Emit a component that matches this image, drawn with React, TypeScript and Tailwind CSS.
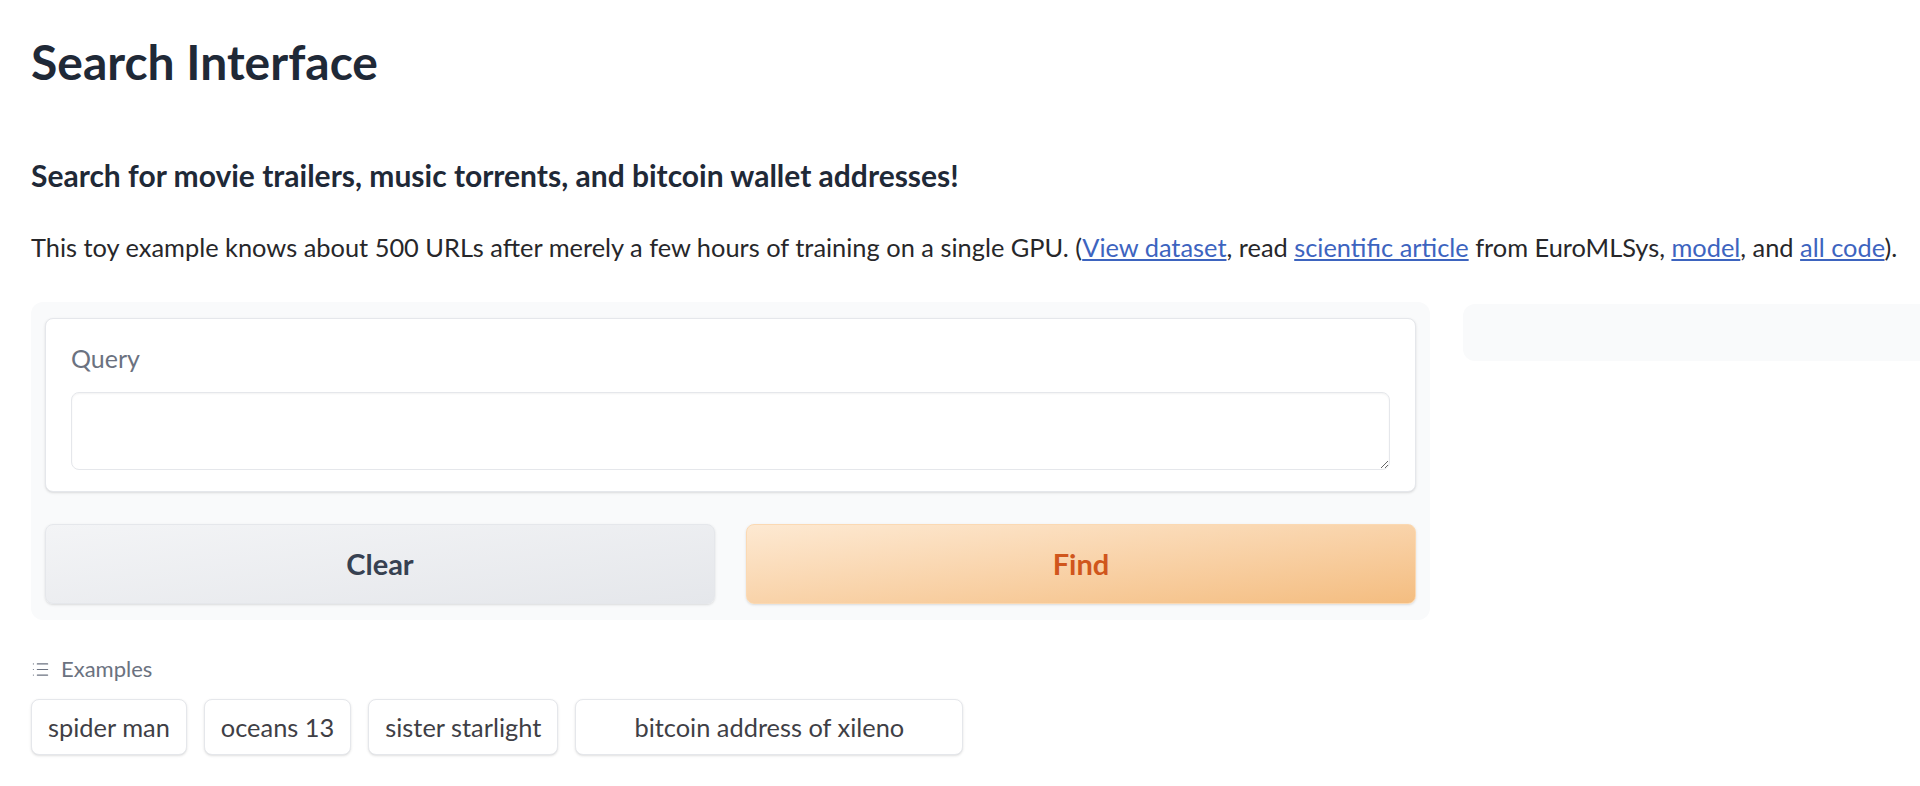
import React from "react";
import { List } from "lucide-react";

const examples = ["spider man", "oceans 13", "sister starlight"];

export default function App() {
  return (
    <div className="min-h-screen overflow-hidden bg-white pl-[31px] font-['Lato','Noto_Sans',sans-serif] text-[#1f2937]">
      <h1 className="pt-[34px] text-[48px] font-bold leading-[56px]">Search Interface</h1>

      <h3 className="mt-[65px] text-[30px] font-bold leading-[40px]">
        Search for movie trailers, music torrents, and bitcoin wallet addresses!
      </h3>

      <p className="mt-[35px] whitespace-nowrap text-[25.4px] leading-[34px] text-[#27272a]">
        This toy example knows about 500 URLs after merely a few hours of training on a single GPU. (
        <a className="text-[#3d64bf] underline">View dataset</a>, read{" "}
        <a className="text-[#3d64bf] underline">scientific article</a> from EuroMLSys,{" "}
        <a className="text-[#3d64bf] underline">model</a>, and{" "}
        <a className="text-[#3d64bf] underline">all code</a>).
      </p>

      <div className="mt-[38px] flex items-start gap-[33px]">
        <div className="flex w-[1399px] shrink-0 flex-col gap-[32px] rounded-xl bg-[#f9fafb] p-[14px] pt-[16px] pb-[16px]">
          <div className="rounded-lg border border-[#e5e7eb] bg-white px-[25px] pt-[24px] pb-[21px] shadow-sm">
            <div className="text-[25px] leading-[30px] text-[#6b7280]">Query</div>
            <textarea className="mt-[19px] block h-[78px] w-full resize-y rounded-lg border border-[#e5e7eb] bg-white shadow-[inset_0_1px_2px_rgba(0,0,0,0.05)] outline-none" />
          </div>
          <div className="flex gap-[31px]">
            <button className="h-[80px] flex-1 rounded-lg border border-[#e5e7eb] bg-gradient-to-br from-[#f3f4f6] to-[#e5e7eb] text-[29px] font-bold text-[#374151] shadow-sm">
              Clear
            </button>
            <button className="h-[80px] flex-1 rounded-lg border border-[#fbd9b3] bg-gradient-to-br from-[#fde9d2] to-[#f4bd80] text-[29px] font-bold text-[#d0561c] shadow-sm">
              Find
            </button>
          </div>
        </div>
        <div className="mt-[2px] h-[57px] w-[520px] shrink-0 rounded-xl bg-[#f9fafb]" />
      </div>

      <div className="mt-[35px] flex items-center gap-[11px] text-[22px] leading-[28px] text-[#6b7280]">
        <List size={19} strokeWidth={1.5} />
        <span>Examples</span>
      </div>

      <div className="mt-[16px] flex gap-[17px]">
        {examples.map((e) => (
          <button
            key={e}
            className="h-[56px] rounded-lg border border-[#e5e7eb] bg-white px-[16px] text-[25.4px] text-[#3f3f46] shadow-sm"
          >
            {e}
          </button>
        ))}
        <button className="h-[56px] w-[388px] rounded-lg border border-[#e5e7eb] bg-white text-[25.4px] text-[#3f3f46] shadow-sm">
          bitcoin address of xileno
        </button>
      </div>
    </div>
  );
}
